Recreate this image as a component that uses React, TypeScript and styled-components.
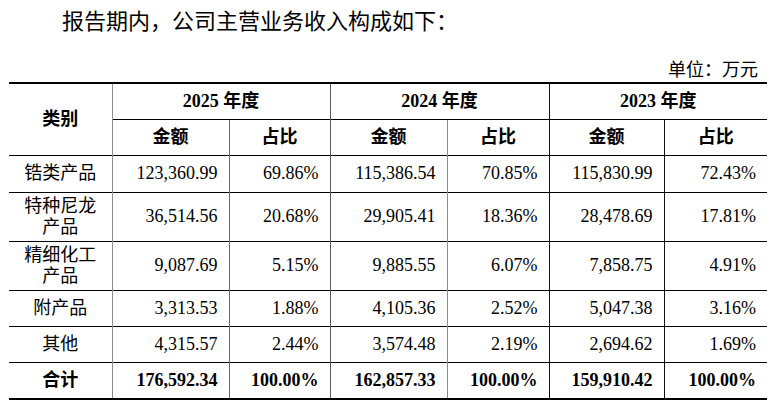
import React from "react";
import styled, { createGlobalStyle } from "styled-components";

const Global = createGlobalStyle`
  html, body { margin: 0; padding: 0; background: #fff; }
  body { font-family: "Liberation Serif", "Noto Sans CJK SC", serif; color: #000; }
`;

const Page = styled.div`
  width: 782px;
  padding: 0 15px 0 9px;
  box-sizing: border-box;
`;

const Title = styled.div`
  height: 44px;
  line-height: 44px;
  padding-left: 53px;
  font-size: 22px;
  font-family: "Liberation Serif", "Noto Sans CJK SC", serif;
`;

const Unit = styled.div`
  padding-top: 15px;
  height: 23px;
  line-height: 22px;
  font-size: 18px;
  text-align: right;
  padding-right: 9px;
`;

const Table = styled.table`
  width: 758px;
  border-collapse: collapse;
  table-layout: fixed;
  border-top: 2px solid #000;
  border-bottom: 2px solid #000;
  font-size: 18px;
`;

const Row = styled.tr<{ $h: number }>`
  height: ${(p) => p.$h}px;
`;

const Cell = styled.td<{ $lc?: string; $align?: "left" | "right" | "center"; $bold?: boolean }>`
  border-top: 1px solid #000;
  border-left: ${(p) => (p.$lc ? `1px solid ${p.$lc}` : "none")};
  padding: 0 11px;
  text-align: ${(p) => p.$align ?? "right"};
  font-weight: ${(p) => (p.$bold ? 700 : 400)};
  line-height: 21px;
  vertical-align: middle;
  white-space: normal;
  word-break: break-all;
`;

const LINE = ["#8c8c8c", "#6a6a6a", "#5a5a5a", "#8c8c8c", "#111", "#111"];

type Item = { name: string; v: [string, string, string, string, string, string]; h: number };

const rows: Item[] = [
  { name: "锆类产品", v: ["123,360.99", "69.86%", "115,386.54", "70.85%", "115,830.99", "72.43%"], h: 37 },
  { name: "特种尼龙产品", v: ["36,514.56", "20.68%", "29,905.41", "18.36%", "28,478.69", "17.81%"], h: 49 },
  { name: "精细化工产品", v: ["9,087.69", "5.15%", "9,885.55", "6.07%", "7,858.75", "4.91%"], h: 49 },
  { name: "附产品", v: ["3,313.53", "1.88%", "4,105.36", "2.52%", "5,047.38", "3.16%"], h: 36 },
  { name: "其他", v: ["4,315.57", "2.44%", "3,574.48", "2.19%", "2,694.62", "1.69%"], h: 36 },
];

const total: Item = {
  name: "合计",
  v: ["176,592.34", "100.00%", "162,857.33", "100.00%", "159,910.42", "100.00%"],
  h: 37,
};

const widths = [103, 117, 101, 117, 102, 115, 103];

function DataRow({ item, bold }: { item: Item; bold?: boolean }) {
  return (
    <Row $h={item.h}>
      <Cell $align="center" $bold={bold}>
        {item.name}
      </Cell>
      {item.v.map((val, i) => (
        <Cell key={i} $lc={LINE[i]} $bold={bold}>
          {val}
        </Cell>
      ))}
    </Row>
  );
}

export default function App() {
  return (
    <Page>
      <Global />
      <Title>报告期内，公司主营业务收入构成如下：</Title>
      <Unit>单位：万元</Unit>
      <Table>
        <colgroup>
          {widths.map((w, i) => (
            <col key={i} style={{ width: w }} />
          ))}
        </colgroup>
        <tbody>
          <Row $h={36}>
            <Cell rowSpan={2} $align="center" $bold>
              类别
            </Cell>
            <Cell colSpan={2} $lc={LINE[0]} $align="center" $bold>
              2025 年度
            </Cell>
            <Cell colSpan={2} $lc={LINE[2]} $align="center" $bold>
              2024 年度
            </Cell>
            <Cell colSpan={2} $lc={LINE[4]} $align="center" $bold>
              2023 年度
            </Cell>
          </Row>
          <Row $h={36}>
            {[0, 1, 2, 3, 4, 5].map((i) => (
              <Cell key={i} $lc={LINE[i]} $align="center" $bold>
                {i % 2 === 0 ? "金额" : "占比"}
              </Cell>
            ))}
          </Row>
          {rows.map((r) => (
            <DataRow key={r.name} item={r} />
          ))}
          <DataRow item={total} bold />
        </tbody>
      </Table>
    </Page>
  );
}
